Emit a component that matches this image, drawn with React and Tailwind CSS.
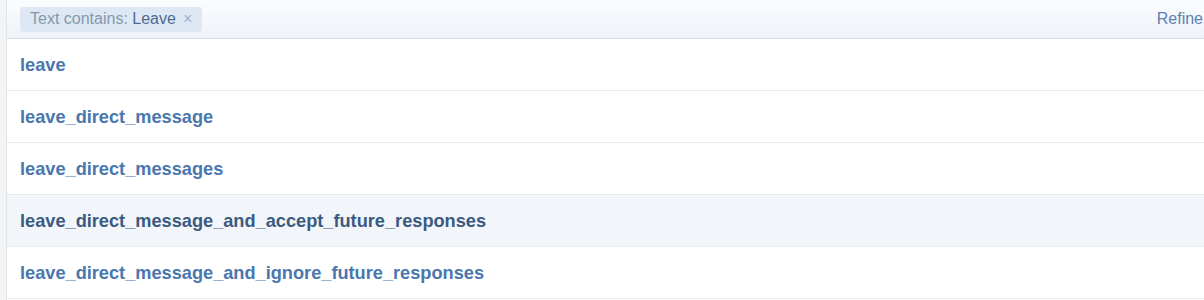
export default function App() {
  const rows = [
    { name: "leave" },
    { name: "leave_direct_message" },
    { name: "leave_direct_messages" },
    { name: "leave_direct_message_and_accept_future_responses", hover: true },
    { name: "leave_direct_message_and_ignore_future_responses" },
  ]

  return (
    <div className="flex h-[300px] w-[1204px] overflow-hidden bg-white font-['Liberation_Sans',Arial,sans-serif]">
      <div className="w-[7px] shrink-0 border-r border-[#e2e4e7] bg-[#f3f4f5]" />
      <div className="flex min-w-0 flex-1 flex-col">
        <div className="flex h-[39px] shrink-0 items-center justify-between border-b border-[#dadee3] bg-gradient-to-b from-[#fbfcfe] to-[#eef3f9] pl-[13px]">
          <div className="flex h-[25px] items-center gap-[7px] rounded-[4px] bg-[#dde8f4] px-[10px] text-[16px]">
            <span className="text-[#8598ad]">
              Text contains: <span className="text-[#4d6b8e]">Leave</span>
            </span>
            <span className="text-[16px] text-[#9fb2c7]">×</span>
          </div>
          <span className="mr-[1px] text-[16px] text-[#5a82b3]">Refine</span>
        </div>
        {rows.map((row) => (
          <div
            key={row.name}
            className={`flex h-[52px] shrink-0 items-center border-b border-[#e8eaec] pl-[13px] pt-[2px] text-[18.2px] font-bold ${
              row.hover ? "bg-[#f2f6fa] text-[#3a5a80]" : "text-[#4a77ad]"
            }`}
          >
            {row.name}
          </div>
        ))}
      </div>
    </div>
  )
}
